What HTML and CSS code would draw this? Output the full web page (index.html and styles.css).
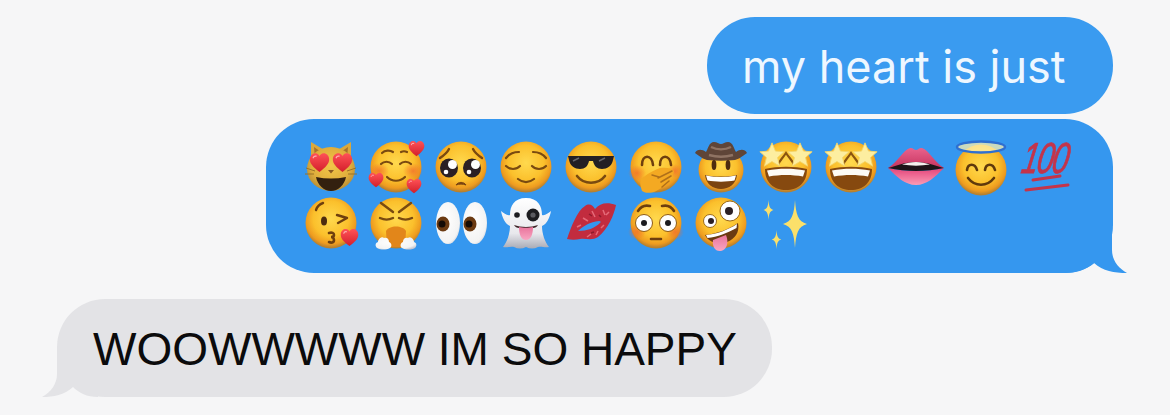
FILE: index.html
```html
<!DOCTYPE html>
<html lang="en">
<head>
<meta charset="utf-8">
<title>Messages</title>
<link rel="stylesheet" href="styles.css">
</head>
<body>
<svg class="defs" width="0" height="0" aria-hidden="true">
  <defs>
    <radialGradient id="skin" cx="50%" cy="42%" r="56%">
      <stop offset="0" stop-color="#ffd94e"/>
      <stop offset=".62" stop-color="#fbc02c"/>
      <stop offset=".88" stop-color="#ee9b1f"/>
      <stop offset="1" stop-color="#b8812f"/>
    </radialGradient>
    <radialGradient id="catSkin" cx="50%" cy="42%" r="58%">
      <stop offset="0" stop-color="#f2c648"/>
      <stop offset=".7" stop-color="#e0ae3c"/>
      <stop offset="1" stop-color="#b78c35"/>
    </radialGradient>
    <radialGradient id="blush" cx="50%" cy="50%" r="50%">
      <stop offset="0" stop-color="#f2702c" stop-opacity=".8"/>
      <stop offset="1" stop-color="#f2702c" stop-opacity="0"/>
    </radialGradient>
    <linearGradient id="heart" x1="0" y1="0" x2="0" y2="1">
      <stop offset="0" stop-color="#ff5257"/>
      <stop offset="1" stop-color="#d31f2b"/>
    </linearGradient>
    <linearGradient id="lipTop" x1="0" y1="0" x2="0" y2="1">
      <stop offset="0" stop-color="#e9628c"/>
      <stop offset="1" stop-color="#c73560"/>
    </linearGradient>
    <linearGradient id="lipLow" x1="0" y1="0" x2="0" y2="1">
      <stop offset="0" stop-color="#e3447a"/>
      <stop offset="1" stop-color="#fb9bb5"/>
    </linearGradient>
    <radialGradient id="white" cx="42%" cy="42%" r="68%">
      <stop offset="0" stop-color="#ffffff"/>
      <stop offset=".8" stop-color="#f3f3f3"/>
      <stop offset="1" stop-color="#c6c8d2"/>
    </radialGradient>
    <linearGradient id="ghost" x1="0" y1="0" x2="0" y2="1">
      <stop offset="0" stop-color="#ffffff"/>
      <stop offset=".7" stop-color="#e8e8ec"/>
      <stop offset="1" stop-color="#a9abb6"/>
    </linearGradient>
    <linearGradient id="tongue" x1="0" y1="0" x2="0" y2="1">
      <stop offset="0" stop-color="#e9749c"/>
      <stop offset="1" stop-color="#f8a6c2"/>
    </linearGradient>
    <symbol id="face" viewBox="0 0 52 52"><circle cx="26" cy="26" r="25.500" fill="url(#skin)"/></symbol>
    <symbol id="hrt" viewBox="0 0 20 20"><path d="M10 19C4 14.500.5 11 .8 6.500 1 3 3.800 .8 6.300 1.100 8 1.300 9.300 2.300 10 3.800c.7-1.500 2-2.500 3.700-2.700C16.200 .8 19 3 19.200 6.500c.3 4.500-3.200 8-9.200 12.500z" fill="url(#heart)"/><path d="M4 5.500c.5-1.300 1.700-1.800 2.800-1.500" fill="none" stroke="#ffb0b0" stroke-width="1.200" stroke-linecap="round"/></symbol>
    <symbol id="star" viewBox="0 0 30 30"><path d="M15 1l4 9.500 10 .8-7.600 6.600 2.400 10-8.800-5.400-8.800 5.400 2.400-10L1 11.300l10-.8z" fill="#fdeea0" stroke="#f3d467" stroke-width="1"/></symbol>
    <symbol id="spark" viewBox="0 0 20 40"><path d="M10 0c.8 12 2.500 18 10 20-7.500 2-9.200 8-10 20C9.200 28 7.500 22 0 20 7.500 18 9.200 12 10 0z" fill="#fbe06a"/></symbol>
  </defs>
</svg>

<main class="thread">
  <div class="row row-out">
    <p class="bubble bubble-out bubble-top text-light">my heart is just</p>
  </div>

  <div class="row row-out">
    <div class="bubble bubble-out bubble-emoji">
      <div class="emoji-row">
        <svg class="emoji" viewBox="0 0 52 52" role="img" aria-label="smiling cat with heart eyes">
          <path d="M6 1l15 9L6 22zM46 1L31 10l15 12z" fill="#d9a83c"/>
          <path d="M9 6l7 5-6 6zM43 6l-7 5 6 6z" fill="#a5722c"/>
          <ellipse cx="26" cy="28" rx="24" ry="22" fill="url(#catSkin)"/>
          <use href="#hrt" x="4" y="11" width="21" height="21"/>
          <use href="#hrt" x="27" y="11" width="21" height="21"/>
          <path d="M23 29h6l-3 3.500z" fill="#8a5a22"/>
          <path d="M11 36c10 2 20 2 30 0-1.500 8-8 14-15 14s-13.500-6-15-14z" fill="#33200f"/>
          <path d="M1 27l9 3M0 33h9M51 27l-9 3M52 33h-9" stroke="#9b7327" stroke-width="1" fill="none"/>
        </svg>
        <svg class="emoji" viewBox="0 0 52 52" role="img" aria-label="smiling face with hearts">
          <use href="#face" width="52" height="52"/>
          <ellipse cx="9" cy="30" rx="10" ry="8" fill="url(#blush)"/>
          <ellipse cx="43" cy="30" rx="10" ry="8" fill="url(#blush)"/>
          <path d="M12 12c3-3 8-3 11-1M31 11c2-1 4-1 6 0M11 23c3-3 8-3 11 0M30 23c3-3 8-3 11 0M17 36c5 5 13 5 18 0" fill="none" stroke="#7a4a10" stroke-width="2.200" stroke-linecap="round"/>
          <use href="#hrt" x="38" y="-1" width="17" height="17"/>
          <use href="#hrt" x="-2" y="31" width="16" height="16"/>
          <use href="#hrt" x="36" y="37" width="16" height="16"/>
        </svg>
        <svg class="emoji" viewBox="0 0 52 52" role="img" aria-label="pleading face">
          <use href="#face" width="52" height="52"/>
          <path d="M5 17c3-2 7-5 9-9M47 17c-3-2-7-5-9-9" fill="none" stroke="#7a4a10" stroke-width="2.400" stroke-linecap="round"/>
          <ellipse cx="14" cy="27" rx="9" ry="9.500" fill="#2b2024"/>
          <ellipse cx="37" cy="27" rx="9" ry="9.500" fill="#2b2024"/>
          <circle cx="17.500" cy="23.500" r="4.500" fill="#fff"/><circle cx="40.500" cy="23.500" r="4.500" fill="#fff"/>
          <circle cx="11" cy="31" r="2.300" fill="#fff"/><circle cx="34" cy="31" r="2.300" fill="#fff"/>
          <path d="M21 44c2-3.500 8-3.500 10 0-3-1.200-7-1.200-10 0z" fill="#7a4411" stroke="#7a4411"/>
        </svg>
        <svg class="emoji" viewBox="0 0 52 52" role="img" aria-label="relieved face">
          <use href="#face" width="52" height="52"/>
          <path d="M6 17c3-4 8-6 13-6M46 17c-3-4-8-6-13-6M6 25c4 4 10 4 14 0M32 25c4 4 10 4 14 0M18 38c5 4 11 4 16 0" fill="none" stroke="#7a4a10" stroke-width="2.200" stroke-linecap="round"/>
        </svg>
        <svg class="emoji" viewBox="0 0 52 52" role="img" aria-label="smiling face with sunglasses">
          <use href="#face" width="52" height="52"/>
          <path d="M3 15h46l-1 4c-1 6-6 9-11 9-5 0-8-3-9-8h-4c-1 5-4 8-9 8-5 0-10-3-11-9z" fill="#232024"/>
          <path d="M8 20l6-3M34 20l6-3" stroke="#67666b" stroke-width="1.500"/>
          <path d="M12 35c7 9 21 9 28 0" fill="none" stroke="#7a4a10" stroke-width="2.600" stroke-linecap="round"/>
        </svg>
        <svg class="emoji" viewBox="0 0 52 52" role="img" aria-label="face with hand over mouth">
          <use href="#face" width="52" height="52"/>
          <ellipse cx="7" cy="32" rx="9" ry="8" fill="url(#blush)"/>
          <ellipse cx="45" cy="30" rx="7" ry="7" fill="url(#blush)"/>
          <path d="M12 24c0-11 10-11 11 0M30 24c0-11 10-11 11 0" fill="none" stroke="#6e3f0e" stroke-width="2.600" stroke-linecap="round"/>
          <path d="M12 50c-3-9-2-12 3-15 4-3 9-6 15-8 6-1 12 0 14 3l-1 4-3 3-3 5-5 4c-5 5-14 8-20 4z" fill="#f4a922"/>
          <path d="M28 37l14-7M31 41l10-6M32 46l7-6M22 34l7 2" fill="none" stroke="#b0701a" stroke-width="1.500" stroke-linecap="round"/>
        </svg>
        <svg class="emoji" viewBox="0 0 52 52" role="img" aria-label="cowboy hat face">
          <circle cx="26" cy="29" r="22.500" fill="url(#skin)"/>
          <path d="M0 12c2-4 7-4 11-1 2-3 3-10 8-10 3 0 5 2 7 2s4-2 7-2c5 0 6 7 8 10 4-3 9-3 11 1-6 4-8 6-12 7-9 1-19 1-28 0-4-1-6-3-12-7z" fill="#5f4538"/>
          <path d="M16 6c6 3 14 3 20 0M14 14c7 2 17 2 24 0" stroke="#a48876" stroke-width="2.500" fill="none" opacity=".7"/>
          <ellipse cx="19" cy="24" rx="2.400" ry="5" fill="#4d2c0f"/><ellipse cx="33" cy="24" rx="2.400" ry="5" fill="#4d2c0f"/>
          <path d="M10 34c10 2 22 2 32 0-1 9-8 14-16 14s-15-5-16-14z" fill="#7a4411"/>
          <path d="M11 34.500c10 2 20 2 30 0l-1.500 5c-8 1.500-19 1.500-27 0z" fill="#fff"/>
        </svg>
        <svg class="emoji" viewBox="0 0 52 52" role="img" aria-label="star-struck">
          <use href="#face" width="52" height="52"/>
          <path d="M18 24c1-4 4-6 8-12 4 6 7 8 8 12" fill="none" stroke="#8a5410" stroke-width="2.200"/>
          <use href="#star" x="-1" y="1" width="26" height="26"/>
          <use href="#star" x="27" y="1" width="26" height="26"/>
          <path d="M5 28c13-3 29-3 42 0 0 14-9 21-21 21S5 42 5 28z" fill="#86490f"/>
          <path d="M7 29.500c12-2.500 26-2.500 38 0l-2 6c-11-2-23-2-34 0z" fill="#fdfbf5"/>
        </svg>
        <svg class="emoji" viewBox="0 0 52 52" role="img" aria-label="star-struck">
          <use href="#face" width="52" height="52"/>
          <path d="M18 24c1-4 4-6 8-12 4 6 7 8 8 12" fill="none" stroke="#8a5410" stroke-width="2.200"/>
          <use href="#star" x="-1" y="1" width="26" height="26"/>
          <use href="#star" x="27" y="1" width="26" height="26"/>
          <path d="M5 28c13-3 29-3 42 0 0 14-9 21-21 21S5 42 5 28z" fill="#86490f"/>
          <path d="M7 29.500c12-2.500 26-2.500 38 0l-2 6c-11-2-23-2-34 0z" fill="#fdfbf5"/>
        </svg>
        <svg class="emoji" viewBox="0 0 52 52" role="img" aria-label="mouth">
          <path d="M-2 27C7 22 13 9 20 7c3-.5 4 2 6 2s3-2.500 6-2c7 2 13 15 22 20z" fill="url(#lipTop)"/>
          <path d="M-2 27c9 2 19 3 28 3s19-1 28-3C45 36 37 44 26 44S7 36-2 27z" fill="url(#lipLow)"/>
          <path d="M-2 27c8-2 17-6 28-6s20 4 28 6c-9 2-19 3-28 3S7 29-2 27z" fill="#1e1418"/>
          <path d="M12 23.500c9-3.500 19-3.500 28 0-9 1.500-19 1.500-28 0z" fill="#f5f0ee"/>
        </svg>
        <svg class="emoji" viewBox="0 0 52 52" role="img" aria-label="smiling face with halo">
          <circle cx="26" cy="29" r="25.500" fill="url(#skin)"/>
          <ellipse cx="26" cy="6" rx="24" ry="5.500" fill="#fdf0ae" fill-opacity=".75" stroke="#2f6fd0" stroke-width="2.500"/>
          <path d="M12 29c1-7 8-7 10 0M30 29c1-7 8-7 10 0M13 37c7 9 19 9 26 0" fill="none" stroke="#5f390c" stroke-width="2.600" stroke-linecap="round"/>
        </svg>
        <svg class="emoji" viewBox="0 0 52 52" role="img" aria-label="hundred points">
          <text class="hundred" transform="translate(0 32) skewX(-10) scale(1 1.450)" x="0" y="0">100</text>
          <path d="M13 39l27-4M6 49l42-5" stroke="#c4344a" stroke-width="3" fill="none" stroke-linecap="round"/>
        </svg>
      </div>
      <div class="emoji-row">
        <svg class="emoji" viewBox="0 0 52 52" role="img" aria-label="face blowing a kiss">
          <use href="#face" width="52" height="52"/>
          <path d="M11 13c1-3 4-6 7-7M32 18l10 3-9 5" fill="none" stroke="#6e3f0e" stroke-width="2.400" stroke-linecap="round" stroke-linejoin="round"/>
          <ellipse cx="19" cy="24" rx="3" ry="4.500" fill="#4d2c0f"/>
          <path d="M24 36c3-1 5 0 5 2s-3 2-3 2 3 0 3 3-3 3-5 2" fill="none" stroke="#6e3f0e" stroke-width="2.600" stroke-linecap="round"/>
          <use href="#hrt" x="35" y="31" width="19" height="19"/>
        </svg>
        <svg class="emoji" viewBox="0 0 52 52" role="img" aria-label="face with steam from nose">
          <use href="#face" width="52" height="52"/>
          <path d="M11 6l12 9M41 6l-12 9M10 21c4 2 9 2 13 0M29 21c4 2 9 2 13 0" fill="none" stroke="#7a4a10" stroke-width="2.400" stroke-linecap="round"/>
          <path d="M16 34c3-6 17-6 20 0l-1 16H17z" fill="#e2861a"/>
          <path d="M7 51c-2-2-2-5 1-6 0-3 4-6 6-4 3-1 5 1 5 4 3 1 3 5 1 6-4 2-9 2-13 0zM45 51c2-2 2-5-1-6 0-3-4-6-6-4-3-1-5 1-5 4-3 1-3 5-1 6 4 2 9 2 13 0z" fill="url(#white)"/>
        </svg>
        <svg class="emoji" viewBox="0 0 52 52" role="img" aria-label="eyes">
          <ellipse cx="13" cy="26" rx="12" ry="21" fill="url(#white)"/>
          <ellipse cx="40" cy="26" rx="12" ry="21" fill="url(#white)"/>
          <ellipse cx="8" cy="27" rx="6.500" ry="7.500" fill="#6b3a12"/><circle cx="7" cy="27" r="3.500" fill="#150b06"/>
          <ellipse cx="35" cy="27" rx="6.500" ry="7.500" fill="#6b3a12"/><circle cx="34" cy="27" r="3.500" fill="#150b06"/>
        </svg>
        <svg class="emoji" viewBox="0 0 52 52" role="img" aria-label="ghost">
          <path d="M26 1C14 1 10 9 10 18c-3 1-6-2-9-4 1 6 4 13 9 15 0 8-3 16-7 21 4 1 8-1 11 0 4 2 8 2 12 0 4 2 8 2 12 0 3-1 7 1 11 0-4-5-7-13-7-21 5-2 8-9 9-15-3 2-6 5-9 4 0-9-4-17-16-17z" fill="url(#ghost)"/>
          <circle cx="17" cy="18" r="2.800" fill="#1c1c20"/>
          <circle cx="33" cy="18" r="6.500" fill="#1c1c20"/><circle cx="33" cy="18" r="2.600" fill="#5a5a60"/>
          <path d="M14 28c7 2.500 17 2.500 24 0-1 2-3 3-5 3H19c-2 0-4-1-5-3z" fill="#3c2226"/>
          <path d="M19 30c4 1 10 1 14 0 0 7-2 13-7 13s-7-6-7-13z" fill="url(#tongue)"/>
        </svg>
        <svg class="emoji" viewBox="0 0 52 52" role="img" aria-label="kiss mark">
          <path d="M2 42C6 30 12 14 20 9c4-3 8-1 10 3 5-6 12-7 21-4-2 10-8 24-18 32-6 4-12 1-18 2-4 1-9 1-13 0z" fill="#c22c3e"/>
          <path d="M13 34c5-5 12-9 21-10 2 0 2 1 1 2-5 5-13 8-22 8z" fill="#3797f0"/>
          <path d="M18 21l5 3M27 14l3 6M38 13l2 5M44 15l-3 3M22 40l4-3M31 38l2-4M39 28l-3 3M12 30l4-2" stroke="#e56a78" stroke-width="1.500"/>
          <path d="M24 17l3 2M34 18l2 2M26 36l3-1" stroke="#8e1a2a" stroke-width="1.500"/>
        </svg>
        <svg class="emoji" viewBox="0 0 52 52" role="img" aria-label="flushed face">
          <use href="#face" width="52" height="52"/>
          <ellipse cx="7" cy="35" rx="9" ry="8" fill="url(#blush)"/>
          <ellipse cx="45" cy="35" rx="9" ry="8" fill="url(#blush)"/>
          <path d="M8 14c3-5 8-6 12-5M44 14c-3-5-8-6-12-5M21 42h10" fill="none" stroke="#6e3f0e" stroke-width="2.600" stroke-linecap="round"/>
          <circle cx="14" cy="26" r="8.500" fill="#fff" stroke="#8d5a14" stroke-width="1"/>
          <circle cx="38" cy="26" r="8.500" fill="#fff" stroke="#8d5a14" stroke-width="1"/>
          <circle cx="14" cy="26" r="3" fill="#1c1c20"/><circle cx="38" cy="26" r="3" fill="#1c1c20"/>
        </svg>
        <svg class="emoji" viewBox="0 0 52 52" role="img" aria-label="zany face">
          <use href="#face" width="52" height="52"/>
          <circle cx="35" cy="14" r="10" fill="#fff" stroke="#9a6a1c" stroke-width="1"/><circle cx="34" cy="14" r="4" fill="#2b2024"/>
          <circle cx="15" cy="24" r="6.500" fill="#fff" stroke="#9a6a1c" stroke-width="1"/><circle cx="16" cy="24" r="3" fill="#2b2024"/>
          <path d="M10 38c12-1 24-6 33-12 2 9-3 16-11 19-8 3-18 1-22-7z" fill="#6b3a12"/>
          <path d="M11 38c11-1 22-5 31-11l-.5 4c-9 5-19 9-29 10z" fill="#fff"/>
          <path d="M18 43l13-5c3 7 1 15-5 16-6 1-9-5-8-11z" fill="url(#tongue)"/>
        </svg>
        <svg class="emoji" viewBox="0 0 52 52" role="img" aria-label="sparkles">
          <use href="#spark" x="2" y="3" width="13" height="20"/>
          <use href="#spark" x="20" y="3" width="30" height="48"/>
          <use href="#spark" x="10" y="33" width="13" height="19"/>
        </svg>
      </div>
      <svg class="tail tail-out" viewBox="0 0 64 48" aria-hidden="true"><path d="M0 0H48V25C48 35 54 43 63 48 50 48 39 46 30 38 22 45 12 48 0 48Z" fill="#3597ef"/></svg>
    </div>
  </div>

  <div class="row row-in">
    <div class="bubble bubble-in text-dark">
      <span class="label">WOOWWWWW IM SO HAPPY</span>
      <svg class="tail tail-in" viewBox="0 0 56 48" aria-hidden="true"><path d="M56 0H15V25C15 35 9 43 0 48 12 48 22 46 31 38 37 44 45 48 56 48Z" fill="#e3e3e6"/></svg>
    </div>
  </div>
</main>
</body>
</html>
```

FILE: styles.css
```css
* { box-sizing: border-box; }

html, body {
  margin: 0;
  height: 100%;
}

body {
  background: #f6f6f7;
  font-family: Inter, "Liberation Sans", Arial, sans-serif;
  overflow: hidden;
}

.defs { position: absolute; }

.thread {
  display: flex;
  flex-direction: column;
  padding: 17px 57px 0;
}

.row { display: flex; }
.row-out { justify-content: flex-end; margin-bottom: 5px; }
.row-in { justify-content: flex-start; margin-top: 21px; }

.bubble {
  position: relative;
  margin: 0;
  border-radius: 48px;
}

.bubble-out { background: #3597ef; }
.bubble-top { background: #3a9bf0; }
.bubble-in { background: #e3e3e6; }

.text-light,
.text-dark {
  display: flex;
  align-items: center;
  white-space: nowrap;
}

.text-light {
  width: 406px;
  height: 97px;
  padding: 2px 0 0 35px;
  font-size: 45px;
  color: #eef7ff;
}

.text-dark {
  width: 715px;
  height: 98px;
  padding: 2px 0 0 36px;
  font-family: "Liberation Sans", Arial, sans-serif;
  font-size: 46px;
  color: #0b0b0c;
}

.label { position: relative; z-index: 1; }

.bubble-emoji {
  width: 847px;
  height: 154px;
  padding: 22px 0 0 39px;
  display: flex;
  flex-direction: column;
  gap: 4px;
}

.emoji-row {
  display: flex;
  gap: 13px;
}

.emoji {
  width: 52px;
  height: 52px;
  overflow: visible;
  filter: blur(0.5px);
}

.hundred {
  font-family: "Liberation Sans", Arial, sans-serif;
  font-style: italic;
  font-size: 30px;
  letter-spacing: -1.500px;
  fill: #c4344a;
  stroke: #c4344a;
  stroke-width: 0.6px;
}

.tail {
  position: absolute;
  bottom: 0;
  height: 48px;
}

.tail-out {
  right: -15px;
  width: 64px;
}

.tail-in {
  left: -15px;
  width: 56px;
}
```
